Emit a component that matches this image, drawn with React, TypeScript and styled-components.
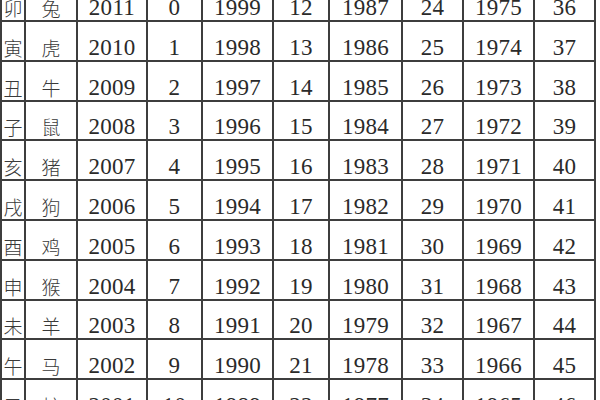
import React from "react";
import styled, { createGlobalStyle } from "styled-components";

const Global = createGlobalStyle`
  html, body { margin: 0; padding: 0; background: #ffffff; overflow: hidden; }
  #root { width: 600px; height: 400px; overflow: hidden; }
`;

const Sheet = styled.div`
  display: grid;
  grid-template-columns: 22px 50px 68px 53px 69px 54px 71px 59px 69px 59px;
  grid-auto-rows: 37.8px;
  gap: 2px;
  padding: 2px;
  width: max-content;
  background: #3e3e3e;
  margin-top: -19.8px;
`;

const Cell = styled.div<{ $cjk?: boolean }>`
  background: #ffffff;
  display: flex;
  align-items: flex-end;
  justify-content: center;
  line-height: 1;
  color: ${(p) => (p.$cjk ? "#3a3a3a" : "#2a2a2a")};
  font-family: ${(p) =>
    p.$cjk
      ? '"Noto Sans CJK SC", "Noto Sans CJK JP", sans-serif'
      : '"Liberation Serif", "Times New Roman", serif'};
  font-size: ${(p) => (p.$cjk ? "19px" : "23px")};
  font-weight: ${(p) => (p.$cjk ? 300 : 400)};
  letter-spacing: ${(p) => (p.$cjk ? "0" : "0.3px")};
  padding-bottom: ${(p) => (p.$cjk ? "3px" : "1px")};
  white-space: nowrap;
`;

const rows: [string, string, number, number, number, number, number, number, number, number][] = [
  ["卯", "兔", 2011, 0, 1999, 12, 1987, 24, 1975, 36],
  ["寅", "虎", 2010, 1, 1998, 13, 1986, 25, 1974, 37],
  ["丑", "牛", 2009, 2, 1997, 14, 1985, 26, 1973, 38],
  ["子", "鼠", 2008, 3, 1996, 15, 1984, 27, 1972, 39],
  ["亥", "猪", 2007, 4, 1995, 16, 1983, 28, 1971, 40],
  ["戌", "狗", 2006, 5, 1994, 17, 1982, 29, 1970, 41],
  ["酉", "鸡", 2005, 6, 1993, 18, 1981, 30, 1969, 42],
  ["申", "猴", 2004, 7, 1992, 19, 1980, 31, 1968, 43],
  ["未", "羊", 2003, 8, 1991, 20, 1979, 32, 1967, 44],
  ["午", "马", 2002, 9, 1990, 21, 1978, 33, 1966, 45],
  ["巳", "蛇", 2001, 10, 1989, 22, 1977, 34, 1965, 46],
];

export default function App() {
  return (
    <>
      <Global />
      <Sheet>
        {rows.map((r, i) =>
          r.map((v, j) => (
            <Cell key={`${i}-${j}`} $cjk={j < 2}>
              {v}
            </Cell>
          ))
        )}
      </Sheet>
    </>
  );
}
